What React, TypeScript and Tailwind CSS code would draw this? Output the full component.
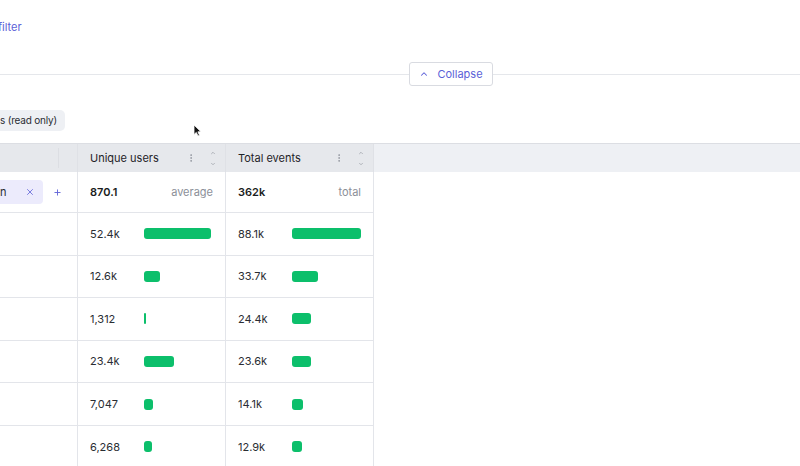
import { ChevronUp, ChevronDown, X, Plus, EllipsisVertical } from "lucide-react";

const rows = [
  { users: "52.4k", usersW: 67, events: "88.1k", eventsW: 69 },
  { users: "12.6k", usersW: 16, events: "33.7k", eventsW: 26 },
  { users: "1,312", usersW: 2, events: "24.4k", eventsW: 19 },
  { users: "23.4k", usersW: 30, events: "23.6k", eventsW: 19 },
  { users: "7,047", usersW: 9, events: "14.1k", eventsW: 11 },
  { users: "6,268", usersW: 8, events: "12.9k", eventsW: 10 },
];

function SortIcon() {
  return (
    <div className="flex flex-col items-center gap-[5px] text-[#8f949c]">
      <ChevronUp className="w-[8px] h-[6px]" strokeWidth={2.5} />
      <ChevronDown className="w-[8px] h-[6px]" strokeWidth={2.5} />
    </div>
  );
}

function HeaderCell({ label }: { label: string }) {
  return (
    <div className="h-[28px] flex items-center pl-3 pr-[8px] border-r border-[#dfe1e6]">
      <span className="flex-1 text-[#1f2328]">{label}</span>
      <EllipsisVertical className="w-[10px] h-[12px] text-[#8f949c] mr-[13px]" strokeWidth={2} />
      <SortIcon />
    </div>
  );
}

function Bar({ value, width }: { value: string; width: number }) {
  return (
    <div className="h-[42.6px] flex items-center pl-3 border-r border-b border-[#e3e5ea]">
      <span className="w-[54px] text-[#2a2d33]">{value}</span>
      <div className="h-[11px] rounded-[3px] bg-[#0cbf6b]" style={{ width }} />
    </div>
  );
}

export default function App() {
  return (
    <div className="relative w-[800px] h-[466px] overflow-hidden bg-white text-[11px] font-['Inter',sans-serif]">
      {/* Filter link */}
      <div className="h-[62px] pt-[19px]">
        <span className="-ml-[2px] text-[#5b5fd8]">filter</span>
      </div>

      {/* Divider with collapse button */}
      <div className="flex items-center h-[24px]">
        <div className="h-px w-[409px] bg-[#e5e7eb]" />
        <button className="h-[24px] w-[84px] flex items-center justify-center gap-[8px] border border-[#d9dbe1] rounded-[3px] text-[#5b5fd8]">
          <ChevronUp className="w-[10px] h-[10px]" strokeWidth={2.5} />
          Collapse
        </button>
        <div className="h-px flex-1 bg-[#e5e7eb]" />
      </div>

      {/* Read only chip */}
      <div className="pt-[24px] h-[57px]">
        <span className="inline-flex items-center h-[21px] pr-[8px] rounded-r-[5px] bg-[#eef0f4] text-[#2a2d33] text-[10px] tracking-[-0.2px]">
          s (read only)
        </span>
      </div>

      {/* Table */}
      <div className="border-t border-[#dcdee3]">
        <div className="grid grid-cols-[78px_148px_148px_1fr] bg-[#eef0f4]">
          <div className="h-[28px] flex bg-[#e6e8ec] border-r border-[#dfe1e6]">
            <div className="w-[59px] border-r border-[#dcdee3] my-[4px]" />
          </div>
          <div className="bg-[#e6e8ec]">
            <HeaderCell label="Unique users" />
          </div>
          <div className="bg-[#e6e8ec]">
            <HeaderCell label="Total events" />
          </div>
          <div />
        </div>

        <div className="grid grid-cols-[78px_148px_148px]">
          {/* Summary row */}
          <div className="h-[41px] flex items-center border-r border-b border-[#e3e5ea]">
            <div className="h-[24px] w-[43px] flex items-center justify-end pr-[8px] rounded-r-[4px] bg-[#ecebfc] text-[#2a2d33]">
              <span className="mr-auto">n</span>
              <X className="w-[10px] h-[10px] text-[#6366d8]" strokeWidth={2} />
            </div>
            <Plus className="w-[9px] h-[9px] ml-[10px] text-[#6366d8]" strokeWidth={2.5} />
          </div>
          <div className="h-[41px] flex items-center justify-between px-3 border-r border-b border-[#e3e5ea]">
            <span className="font-semibold text-[#1a1c20]">870.1</span>
            <span className="text-[#8b8f98]">average</span>
          </div>
          <div className="h-[41px] flex items-center justify-between px-3 border-r border-b border-[#e3e5ea]">
            <span className="font-semibold text-[#1a1c20]">362k</span>
            <span className="text-[#8b8f98]">total</span>
          </div>

          {rows.map((r, i) => (
            <div key={i} className="contents">
              <div className="h-[42.6px] border-r border-b border-[#e3e5ea]" />
              <Bar value={r.users} width={r.usersW} />
              <Bar value={r.events} width={r.eventsW} />
            </div>
          ))}
        </div>
      </div>

      {/* Mouse cursor */}
      <svg className="absolute left-[193px] top-[124px]" width="9" height="13" viewBox="0 0 9 13">
        <path d="M1 1 L1 10.5 L3.3 8.4 L5 12 L6.5 11.3 L4.9 7.8 L8 7.8 Z" fill="#111" stroke="#fff" strokeWidth="0.8" />
      </svg>
    </div>
  );
}
